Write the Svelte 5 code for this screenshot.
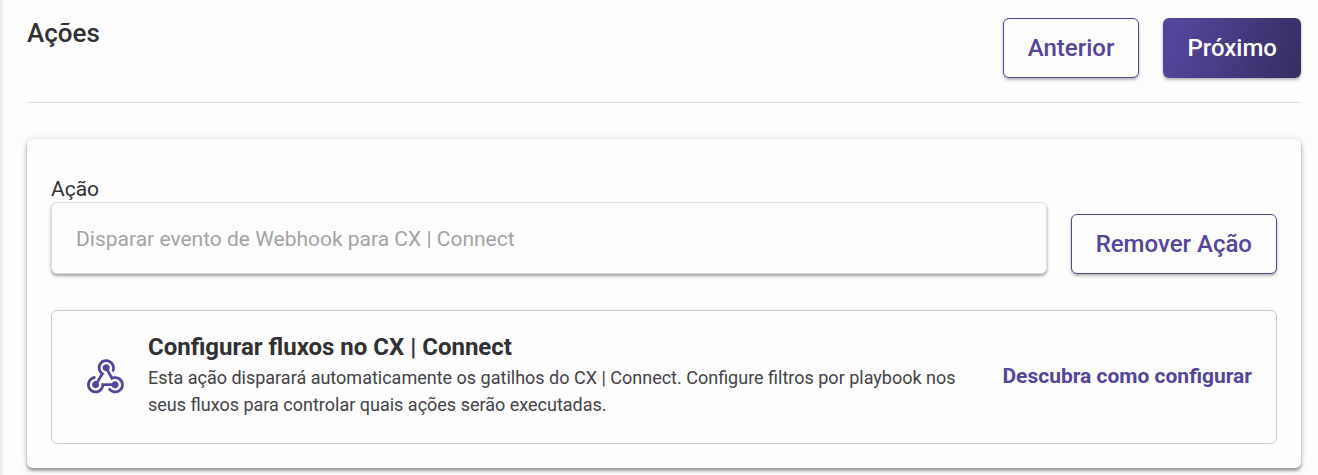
<script lang="ts">
	let action = $state('Disparar evento de Webhook para CX | Connect');
</script>

<main class="page">
	<header class="header">
		<h1 class="heading">Ações</h1>
		<div class="header-actions">
			<button type="button" class="button">Anterior</button>
			<button type="button" class="button button-primary">Próximo</button>
		</div>
	</header>

	<section class="card">
		<div class="action-row">
			<div class="field">
				<label for="action" class="field-label">Ação</label>
				<input id="action" class="field-input" type="text" bind:value={action} disabled />
			</div>
			<button type="button" class="button">Remover Ação</button>
		</div>

		<div class="info">
			<svg class="info-icon" viewBox="0 0 24 24" aria-hidden="true">
				<path
					d="M10.46,19C9,21.07 6.15,21.59 4.09,20.15C2.04,18.71 1.56,15.84 3,13.75C3.87,12.5 5.21,11.83 6.58,11.77L6.63,13.2C5.72,13.27 4.84,13.74 4.27,14.56C3.27,16 3.58,17.94 4.95,18.91C6.33,19.87 8.26,19.5 9.26,18.07C9.57,17.62 9.75,17.13 9.82,16.63V15.62L15.4,15.58L15.47,15.47C16,14.55 17.15,14.23 18.05,14.75C18.95,15.27 19.26,16.43 18.73,17.35C18.2,18.26 17.04,18.58 16.14,18.06C15.73,17.83 15.44,17.46 15.31,17.04L11.24,17.06C11.13,17.73 10.87,18.38 10.46,19M17.74,11.86C20.27,12.17 22.07,14.44 21.76,16.93C21.45,19.43 19.15,21.2 16.62,20.89C15.13,20.71 13.9,19.86 13.19,18.68L14.43,17.96C14.92,18.73 15.75,19.28 16.75,19.41C18.5,19.62 20.05,18.43 20.26,16.76C20.47,15.09 19.23,13.56 17.5,13.35C16.96,13.29 16.44,13.36 15.97,13.53L15.12,13.97L12.54,9.2H12.32C11.26,9.16 10.41,8.29 10.44,7.25C10.47,6.21 11.4,5.4 12.45,5.44C13.5,5.5 14.33,6.35 14.3,7.39C14.28,7.83 14.11,8.23 13.84,8.54L15.74,12.05C16.36,11.85 17.04,11.78 17.74,11.86M8.25,9.14C7.25,6.79 8.31,4.1 10.62,3.12C12.94,2.14 15.62,3.25 16.62,5.6C17.21,6.97 17.09,8.47 16.42,9.67L15.18,8.95C15.6,8.14 15.67,7.15 15.27,6.22C14.59,4.62 12.78,3.85 11.23,4.5C9.67,5.16 8.97,7 9.65,8.6C9.93,9.26 10.4,9.77 10.97,10.11L11.36,10.32L8.29,15.31C8.32,15.36 8.36,15.42 8.39,15.5C8.88,16.41 8.54,17.56 7.62,18.05C6.71,18.54 5.56,18.18 5.06,17.24C4.57,16.31 4.91,15.16 5.83,14.67C6.22,14.46 6.65,14.41 7.06,14.5L9.37,10.73C8.9,10.3 8.5,9.76 8.25,9.14Z"
				/>
			</svg>
			<div class="info-content">
				<h2 class="info-title">Configurar fluxos no CX | Connect</h2>
				<p class="info-text">
					Esta ação disparará automaticamente os gatilhos do CX | Connect. Configure filtros por
					playbook nos seus fluxos para controlar quais ações serão executadas.
				</p>
			</div>
			<a href="#configurar" class="info-link">Descubra como configurar</a>
		</div>
	</section>
</main>

<style>
	:global(body) {
		background: #fdfdfd;
	}

	.page {
		--purple: #54449a;
		--text: #313033;

		box-sizing: border-box;
		min-height: 100vh;
		padding: 18px 17px 6px 24px;
		border-left: 3px solid #f0f0f0;
		font-family: Roboto, sans-serif;
		color: var(--text);
	}

	.header {
		display: flex;
		justify-content: space-between;
		align-items: flex-start;
		padding-bottom: 24px;
		border-bottom: 1px solid #dedede;
	}

	.heading {
		margin: 0;
		font-size: 26px;
		font-weight: 500;
		line-height: 30px;
	}

	.header-actions {
		display: flex;
		gap: 24px;
	}

	.button {
		flex-shrink: 0;
		height: 60px;
		padding: 0 24px;
		border: 1px solid var(--purple);
		border-radius: 6px;
		background: #fdfdfd;
		box-shadow: 0 2px 3px rgba(49, 48, 51, 0.35);
		font-family: inherit;
		font-size: 24px;
		font-weight: 500;
		color: var(--purple);
		cursor: pointer;
	}

	.button-primary {
		border: 0;
		background: linear-gradient(108deg, #54449a 12%, #392e63 96%);
		color: #fff;
	}

	.card {
		margin-top: 36px;
		padding: 38px 24px 24px;
		border-radius: 6px;
		background: #fdfdfd;
		box-shadow:
			0 3px 3px rgba(49, 48, 51, 0.36),
			0 1px 6px rgba(49, 48, 51, 0.26);
	}

	.action-row {
		display: flex;
		align-items: flex-end;
		gap: 24px;
	}

	.field {
		flex: 1;
		display: flex;
		flex-direction: column;
	}

	.field-label {
		font-size: 21px;
		line-height: 25px;
	}

	.field-input {
		box-sizing: border-box;
		width: 100%;
		height: 72px;
		padding: 2px 24px 0;
		border: 1px solid #dedede;
		border-radius: 6px;
		background: #fdfdfd;
		box-shadow: 0 2px 3px rgba(49, 48, 51, 0.45);
		font-family: inherit;
		font-size: 21px;
		color: #a3a3a3;
	}

	.info {
		display: flex;
		align-items: center;
		margin-top: 36px;
		padding: 24px 24px 25px;
		border: 1px solid #cbcbcb;
		border-radius: 6px;
	}

	.info-icon {
		flex-shrink: 0;
		width: 45px;
		height: 45px;
		margin: 0 20px 0 7px;
		fill: var(--purple);
	}

	.info-content {
		flex: 1;
	}

	.info-title {
		margin: 0 0 5px;
		font-size: 24px;
		font-weight: 700;
		line-height: 24px;
	}

	.info-text {
		margin: 0;
		font-size: 18px;
		line-height: 27px;
		color: #434246;
	}

	.info-link {
		flex-shrink: 0;
		margin-left: 36px;
		font-size: 21px;
		font-weight: 700;
		line-height: 27px;
		color: var(--purple);
		text-decoration: none;
	}
</style>
